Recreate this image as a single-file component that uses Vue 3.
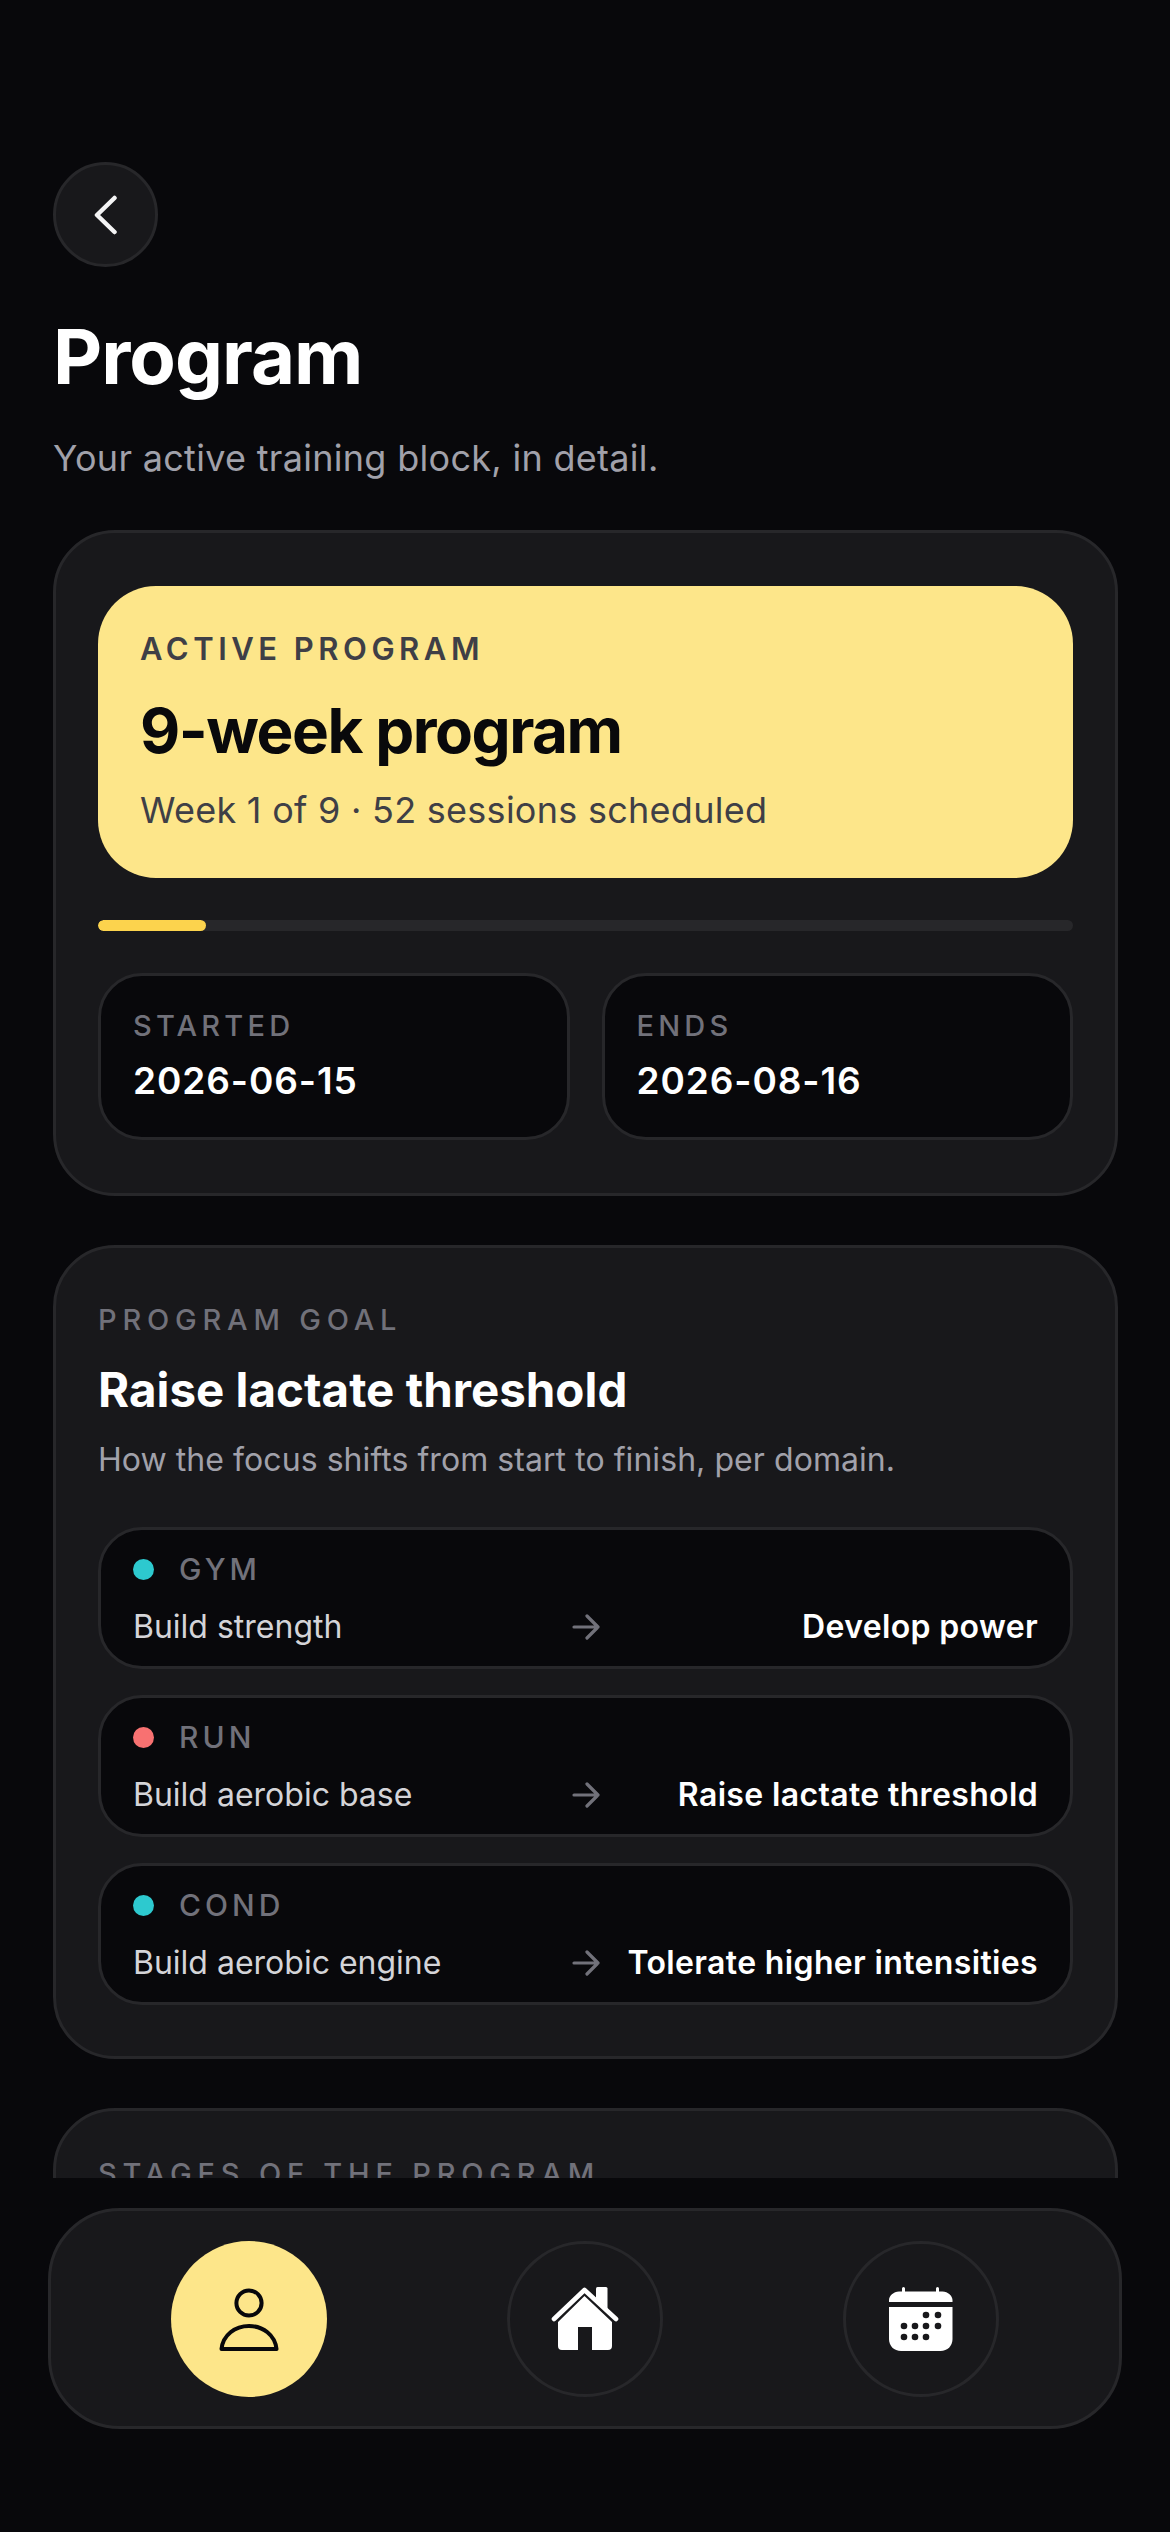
<script setup>
const domains = [
  { name: 'GYM', color: '#2dc9cf', from: 'Build strength', to: 'Develop power' },
  { name: 'RUN', color: '#f87171', from: 'Build aerobic base', to: 'Raise lactate threshold' },
  { name: 'COND', color: '#2dc9cf', from: 'Build aerobic engine', to: 'Tolerate higher intensities' }
]
const dates = [
  { label: 'STARTED', value: '2026-06-15' },
  { label: 'ENDS', value: '2026-08-16' }
]
</script>

<template>
  <div class="page">
    <div class="scroller">
      <button class="back" aria-label="Back">
        <svg width="24" height="40" viewBox="0 0 24 40" fill="none" stroke="#f4f4f5" stroke-width="4.5" stroke-linecap="round" stroke-linejoin="round">
          <path d="M20.500 3 3 20l17.500 17" />
        </svg>
      </button>
      <h1 class="title">Program</h1>
      <p class="subtitle">Your active training block, in detail.</p>

      <section class="card first">
        <div class="hero">
          <div class="heroLabel">ACTIVE PROGRAM</div>
          <div class="heroTitle">9-week program</div>
          <div class="heroSub">Week 1 of 9 · 52 sessions scheduled</div>
        </div>
        <div class="track"><div class="fill" :style="{ width: (100 / 9) + '%' }"></div></div>
        <div class="tiles">
          <div v-for="d in dates" :key="d.label" class="tile">
            <div class="tileLabel">{{ d.label }}</div>
            <div class="tileValue">{{ d.value }}</div>
          </div>
        </div>
      </section>

      <section class="card goal">
        <div class="eyebrow">PROGRAM GOAL</div>
        <h2 class="goalTitle">Raise lactate threshold</h2>
        <p class="goalSub">How the focus shifts from start to finish, per domain.</p>
        <div class="rows">
          <div v-for="d in domains" :key="d.name" class="row">
            <div class="rowHead">
              <span class="dot" :style="{ background: d.color }"></span>
              <span class="rowName">{{ d.name }}</span>
            </div>
            <div class="rowBody">
              <span class="from">{{ d.from }}</span>
              <svg width="28" height="26" viewBox="0 0 28 26" fill="none" stroke="#71717a" stroke-width="3.2" stroke-linecap="round" stroke-linejoin="round">
                <path d="M2 13h24M15 2l11 11-11 11" />
              </svg>
              <span class="to">{{ d.to }}</span>
            </div>
          </div>
        </div>
      </section>

      <section class="card stages">
        <div class="eyebrow">STAGES OF THE PROGRAM</div>
      </section>
    </div>

    <nav class="nav">
      <button class="navBtn active" aria-label="Profile">
        <svg width="60" height="66" viewBox="0 0 60 66" fill="none" stroke="#08080b" stroke-width="4" stroke-linejoin="round">
          <circle cx="30" cy="17" r="12.6" />
          <path d="M2.500 63C4 49 16 40 30 40s26 9 27.500 23z" />
        </svg>
      </button>
      <button class="navBtn" aria-label="Home">
        <svg width="68" height="64" viewBox="0 0 68 64">
          <path d="M45 1.500a1.500 1.500 0 0 1 1.500-1.500h8.500a1.500 1.500 0 0 1 1.500 1.500V22L45 11z" fill="#fff" />
          <path d="M3 32 33.500 3 65 32" fill="none" stroke="#fff" stroke-width="4.600" stroke-linecap="round" stroke-linejoin="round" />
          <path d="M33.500 9 61 35v24a4 4 0 0 1-4 4H41V40H27v23H11a4 4 0 0 1-4-4V35z" fill="#fff" />
        </svg>
      </button>
      <button class="navBtn" aria-label="Calendar">
        <svg width="64" height="64" viewBox="0 0 64 64">
          <path d="M13 4.500V1.500a1.500 1.500 0 0 1 3 0v3h31V1.500a1.500 1.500 0 0 1 3 0v3h3.500C59 4.500 63.500 9 63.500 13v2H0v-2C0 9 4.500 4.500 10 4.500z" fill="#fff" />
          <path d="M0 20h63.500v32c0 7-5 12-12 12H12C5 64 0 59 0 52z" fill="#fff" />
          <g fill="#18181b">
            <circle cx="37" cy="28" r="3.300" />
            <circle cx="49" cy="28" r="3.300" />
            <circle cx="15" cy="39" r="3.300" />
            <circle cx="26" cy="39" r="3.300" />
            <circle cx="37" cy="39" r="3.300" />
            <circle cx="49" cy="39" r="3.300" />
            <circle cx="15" cy="50" r="3.300" />
            <circle cx="26" cy="50" r="3.300" />
            <circle cx="37" cy="50" r="3.300" />
          </g>
        </svg>
      </button>
    </nav>
  </div>
</template>

<style scoped>
.page {
  width: 1170px;
  height: 2532px;
  background: #08080b;
  overflow: hidden;
  font-family: Inter, "Liberation Sans", sans-serif;
  color: #fff;
}

.scroller {
  height: 2178px;
  overflow: hidden;
  padding: 162px 52px 0 53px;
  box-sizing: border-box;
}

.back {
  display: flex;
  align-items: center;
  justify-content: center;
  width: 105px;
  height: 105px;
  padding: 0;
  border-radius: 50%;
  border: 3px solid #27272a;
  background: #18181b;
}

.title {
  margin: 43px 0 0;
  font-size: 76px;
  line-height: 92px;
  font-weight: 700;
  letter-spacing: -1px;
}

.subtitle {
  margin: 32px 0 0;
  font-size: 36px;
  line-height: 48px;
  color: #a1a1aa;
  letter-spacing: 0.3px;
}

.card {
  box-sizing: border-box;
  border: 3px solid #27272a;
  border-radius: 62px;
  background: #18181b;
  padding: 53px 42px;
}

.first {
  margin-top: 48px;
  height: 666px;
}

.hero {
  box-sizing: border-box;
  height: 292px;
  border-radius: 58px;
  background: #fde68a;
  padding: 43px 42px;
  color: #09090b;
}

.heroLabel {
  font-size: 31px;
  line-height: 40px;
  font-weight: 600;
  letter-spacing: 4.500px;
  color: #3f3f46;
}

.heroTitle {
  margin-top: 25px;
  font-size: 62px;
  line-height: 74px;
  font-weight: 700;
  letter-spacing: -1.5px;
}

.heroSub {
  margin-top: 19px;
  font-size: 36px;
  line-height: 46px;
  color: #3f3f46;
  letter-spacing: 0.27px;
}

.track {
  margin-top: 42px;
  height: 11px;
  border-radius: 6px;
  background: #27272a;
  overflow: hidden;
}

.fill {
  height: 100%;
  border-radius: 6px;
  background: #fcd34d;
}

.tiles {
  display: grid;
  grid-template-columns: 1fr 1fr;
  gap: 32px;
  margin-top: 42px;
}

.tile {
  box-sizing: border-box;
  height: 167px;
  border: 3px solid #27272a;
  border-radius: 44px;
  background: #08080b;
  padding: 31px 32px;
}

.tileLabel {
  font-size: 29px;
  line-height: 38px;
  font-weight: 500;
  letter-spacing: 4.200px;
  color: #71717a;
}

.tileValue {
  margin-top: 13px;
  font-size: 37px;
  line-height: 46px;
  font-weight: 600;
  letter-spacing: 0.9px;
}

.goal {
  margin-top: 49px;
  height: 814px;
}

.eyebrow {
  font-size: 29px;
  line-height: 38px;
  font-weight: 500;
  letter-spacing: 5.800px;
  color: #71717a;
}

.goalTitle {
  margin: 23px 0 0;
  font-size: 47.500px;
  line-height: 56px;
  font-weight: 700;
}

.goalSub {
  margin: 21px 0 0;
  font-size: 32px;
  line-height: 42px;
  color: #a1a1aa;
  letter-spacing: 0.06px;
}

.rows {
  display: flex;
  flex-direction: column;
  gap: 26px;
  margin-top: 46px;
}

.row {
  box-sizing: border-box;
  height: 142px;
  border: 3px solid #27272a;
  border-radius: 44px;
  background: #08080b;
  padding: 20px 32px;
}

.rowHead {
  display: flex;
  align-items: center;
  gap: 25px;
}

.dot {
  width: 21px;
  height: 21px;
  border-radius: 50%;
}

.rowName {
  font-size: 30px;
  line-height: 38px;
  font-weight: 500;
  letter-spacing: 4px;
  color: #71717a;
}

.rowBody {
  display: grid;
  grid-template-columns: 1fr 28px 1fr;
  gap: 15px;
  align-items: center;
  margin-top: 18px;
  font-size: 32px;
  line-height: 42px;
}

.from {
  color: #d4d4d8;
}

.to {
  text-align: right;
  font-weight: 600;
  letter-spacing: 0.35px;
  color: #fff;
}

.stages {
  margin-top: 49px;
  height: 400px;
  padding-top: 44px;
}

.nav {
  box-sizing: border-box;
  display: flex;
  justify-content: center;
  align-items: center;
  gap: 180px;
  width: 1074px;
  height: 221px;
  margin: 30px 0 0 48px;
  border: 3px solid #27272a;
  border-radius: 72px;
  background: #18181b;
}

.navBtn {
  display: flex;
  align-items: center;
  justify-content: center;
  box-sizing: border-box;
  width: 156px;
  height: 156px;
  padding: 0;
  border-radius: 50%;
  border: 3px solid #27272a;
  background: transparent;
}

.active {
  border: none;
  background: #fde68a;
}
</style>
